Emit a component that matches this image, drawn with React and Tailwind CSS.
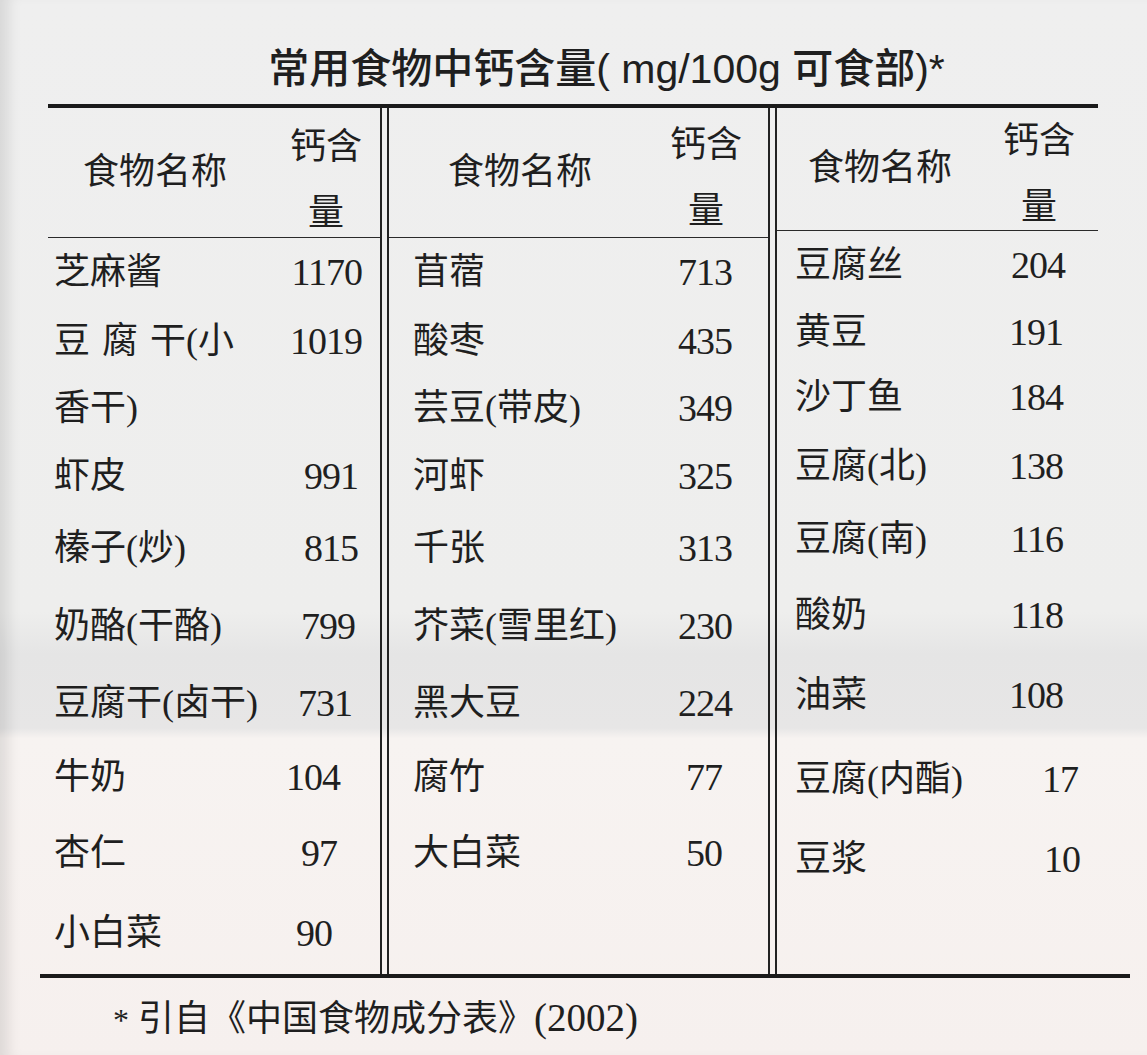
const LEFT = [
  { name: '芝麻酱', qty: '1170', h: 'h-[70px]', pr: 'pr-[18px]' },
  { name: '豆腐干(小', qty: '1019', h: 'h-[67px]', pr: 'pr-[18px]', spaced: true },
  { name: '香干)', qty: '', h: 'h-[67px]', pr: 'pr-[18px]' },
  { name: '虾皮', qty: '991', h: 'h-[69px]', pr: 'pr-[22px]' },
  { name: '榛子(炒)', qty: '815', h: 'h-[76px]', pr: 'pr-[22px]' },
  { name: '奶酪(干酪)', qty: '799', h: 'h-[80px]', pr: 'pr-[25px]' },
  { name: '豆腐干(卤干)', qty: '731', h: 'h-[74px]', pr: 'pr-[28px]' },
  { name: '牛奶', qty: '104', h: 'h-[74px]', pr: 'pr-[40px]' },
  { name: '杏仁', qty: '97', h: 'h-[78px]', pr: 'pr-[43px]' },
  { name: '小白菜', qty: '90', h: 'flex-1', pr: 'pr-[48px]' },
]

const MIDDLE = [
  { name: '苜蓿', qty: '713', h: 'h-[70px]', pr: 'pr-[36px]' },
  { name: '酸枣', qty: '435', h: 'h-[67px]', pr: 'pr-[36px]' },
  { name: '芸豆(带皮)', qty: '349', h: 'h-[67px]', pr: 'pr-[36px]' },
  { name: '河虾', qty: '325', h: 'h-[69px]', pr: 'pr-[36px]' },
  { name: '千张', qty: '313', h: 'h-[76px]', pr: 'pr-[36px]' },
  { name: '芥菜(雪里红)', qty: '230', h: 'h-[80px]', pr: 'pr-[36px]' },
  { name: '黑大豆', qty: '224', h: 'h-[74px]', pr: 'pr-[36px]' },
  { name: '腐竹', qty: '77', h: 'h-[74px]', pr: 'pr-[46px]' },
  { name: '大白菜', qty: '50', h: 'h-[78px]', pr: 'pr-[46px]' },
  { name: '', qty: '', h: 'flex-1', pr: 'pr-[36px]' },
]

const RIGHT = [
  { name: '豆腐丝', qty: '204', h: 'h-[69px]', pr: 'pr-[33px]' },
  { name: '黄豆', qty: '191', h: 'h-[65px]', pr: 'pr-[35px]' },
  { name: '沙丁鱼', qty: '184', h: 'h-[66px]', pr: 'pr-[35px]' },
  { name: '豆腐(北)', qty: '138', h: 'h-[71px]', pr: 'pr-[35px]' },
  { name: '豆腐(南)', qty: '116', h: 'h-[75px]', pr: 'pr-[35px]' },
  { name: '酸奶', qty: '118', h: 'h-[77px]', pr: 'pr-[35px]' },
  { name: '油菜', qty: '108', h: 'h-[84px]', pr: 'pr-[35px]' },
  { name: '豆腐(内酯)', qty: '17', h: 'h-[83px]', pr: 'pr-[20px]' },
  { name: '豆浆', qty: '10', h: 'h-[78px]', pr: 'pr-[18px]' },
  { name: '', qty: '', h: 'flex-1', pr: 'pr-[35px]' },
]

function Row({ item, pl }) {
  // the printed line "豆 腐 干(小" is justified, so its first glyphs sit apart
  const name = item.spaced ? (
    <span>
      <span className="tracking-[12px]">{item.name.slice(0, 2)}</span>
      <span>{item.name.slice(2)}</span>
    </span>
  ) : (
    <span>{item.name}</span>
  )

  return (
    <div className={`flex items-center justify-between ${item.h} ${pl} ${item.pr}`}>
      {name}
      <span className="text-[38px] tracking-[-1px]">{item.qty}</span>
    </div>
  )
}

function Section({ width, headH, headPl, qtyPt, qtyPr, pl, rows }) {
  return (
    <div className={`flex flex-col ${width}`}>
      <div className={`flex border-b-[1.5px] border-[#2a2a2a] ${headH}`}>
        <div className={`flex flex-1 items-center ${headPl}`}>食物名称</div>
        <div className={`w-[72px] text-center leading-[66px] ${qtyPt} ${qtyPr}`}>
          钙含量
        </div>
      </div>
      {rows.map((item, i) => (
        <Row key={i} item={item} pl={pl} />
      ))}
    </div>
  )
}

function Divider() {
  return <div className="w-[9px] shrink-0 border-x-2 border-[#222]" />
}

export default function App() {
  return (
    <div
      className="relative h-[1055px] w-[1147px] overflow-hidden bg-[linear-gradient(180deg,#efefef_0%,#eeeeed_58%,#e5e5e5_62%,#e7e6e6_69%,#f7f3f1_70%,#f6f0ee_100%)] text-[#1f1f1f] shadow-[inset_16px_0_14px_-8px_rgba(0,0,0,0.10)]"
      style={{ fontFamily: '"Liberation Serif", "Noto Sans CJK SC", serif' }}
    >
      <div
        className="flex h-[104px] items-start justify-center pl-[66px] pt-[49px] text-[41px] leading-[40px] font-medium"
        style={{ fontFamily: '"Liberation Sans", "Noto Sans CJK SC", sans-serif' }}
      >
        常用食物中钙含量( mg/100g 可食部)*
      </div>

      <div className="ml-[48px] w-[1050px] border-t-4 border-[#1a1a1a]">
        <div className="flex h-[866px] text-[36px] leading-[1.2]">
          <Section
            width="w-[332px]"
            headH="h-[130px]"
            headPl="pl-[35px]"
            qtyPt="pt-[6px]"
            qtyPr="mr-[18px]"
            pl="pl-[6px]"
            rows={LEFT}
          />
          <Divider />
          <Section
            width="w-[379px]"
            headH="h-[130px]"
            headPl="pl-[59px]"
            qtyPt="pt-[4px]"
            qtyPr="mr-[26px]"
            pl="pl-[24px]"
            rows={MIDDLE}
          />
          <Divider />
          <Section
            width="w-[321px]"
            headH="h-[123px]"
            headPl="pl-[31px]"
            qtyPt="pt-0"
            qtyPr="mr-[23px]"
            pl="pl-[18px]"
            rows={RIGHT}
          />
        </div>
      </div>

      <div className="ml-[40px] h-[4px] w-[1090px] bg-[#1a1a1a]" />

      <div className="mt-[20px] pl-[113px] text-[36px] leading-[40px]">
        <span className="text-[32px]">*</span> 引自《中国食物成分表》<span className="text-[39px]">(2002)</span>
      </div>
    </div>
  )
}
